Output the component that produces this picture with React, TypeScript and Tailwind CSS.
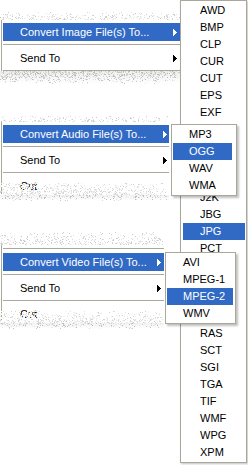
import React, { useMemo } from "react";

function cls(...c: (string | false | undefined)[]) {
  return c.filter(Boolean).join(" ");
}

// tiny seeded generator so the dissolved edges look the same every render
function rng(seed: number) {
  let s = seed >>> 0;
  return () => {
    s = (Math.imul(s, 1664525) + 1013904223) >>> 0;
    return s / 4294967296;
  };
}

const LIGHT = ["#d8d8d8", "#e2e2e2", "#ebebeb", "#cccccc"];
const GRAY = ["#bcbcbc", "#cccccc", "#d8d8d8", "#e4e4e4", "#eeeeee"];
const WASH = ["#ffffff", "#ffffff", "#ffffff", "#ffffff", "#f2f2f2", "#e4e4e4", "#d4d4d4"];

type SpeckleProps = {
  w: number;
  h: number;
  seed: number;
  from: number;
  to: number;
  palette: string[];
  className?: string;
};

function Speckle({ w, h, seed, from, to, palette, className }: SpeckleProps) {
  const paths = useMemo(() => {
    const r = rng(seed);
    const out = palette.map(() => "");
    for (let y = 0; y < h; y++) {
      const d = from + (to - from) * (h === 1 ? 0 : y / (h - 1));
      for (let x = 0; x < w; x++) {
        const edge = Math.min(1, (w - x) / 8);
        if (r() < d * edge) {
          const i = Math.floor(r() * palette.length);
          out[i] += `M${x} ${y}h1v1h-1z`;
        }
      }
    }
    return out;
  }, [w, h, seed, from, to, palette]);

  return (
    <svg width={w} height={h} className={className} shapeRendering="crispEdges" aria-hidden>
      {paths.map((d, i) => (d ? <path key={i} d={d} fill={palette[i]} /> : null))}
    </svg>
  );
}

function Arrow({ white }: { white?: boolean }) {
  return (
    <svg width="4" height="7" viewBox="0 0 4 7" shapeRendering="crispEdges" className="shrink-0">
      <path d="M0 0h1v7H0zM1 1h1v5H1zM2 2h1v3H2zM3 3h1v1H3z" fill={white ? "#fff" : "#000"} />
    </svg>
  );
}

function Item({
  label,
  hi,
  arrow,
  className,
}: {
  label: string;
  hi?: boolean;
  arrow?: boolean;
  className?: string;
}) {
  return (
    <div
      className={cls(
        "flex h-[18px] items-center justify-between whitespace-nowrap pl-[17px]",
        hi ? "bg-[#316ac5] text-white" : "text-black",
        className
      )}
    >
      <span>{label}</span>
      {arrow && <Arrow white={hi} />}
    </div>
  );
}

function Sep() {
  return (
    <div className="h-[8px] pt-[3px]">
      <div className="h-px bg-[#aca899]" />
    </div>
  );
}

function SubItem({
  label,
  hi,
  hidden,
  className,
}: {
  label: string;
  hi?: boolean;
  hidden?: boolean;
  className?: string;
}) {
  return (
    <div
      className={cls(
        "flex h-[17px] items-center whitespace-nowrap",
        hi ? "bg-[#316ac5] text-white" : "text-black",
        hidden && "invisible",
        className
      )}
    >
      {label}
    </div>
  );
}

// items that sit under the audio / video submenus are kept for the row count only
const FORMATS: [string, boolean][] = [
  ["AWD", false], ["BMP", false], ["CLP", false], ["CUR", false], ["CUT", false],
  ["EPS", false], ["EXF", false], ["FAX", true], ["GIF", true], ["ICO", true],
  ["IFF", true], ["J2K", false], ["JBG", false], ["JPG", false], ["PCT", false],
  ["PCX", true], ["PIC", true], ["PNG", true], ["PSD", true], ["RAS", false],
  ["SCT", false], ["SGI", false], ["TGA", false], ["TIF", false], ["WMF", false],
  ["WPG", false], ["XPM", false],
];

export default function App() {
  return (
    <div className="relative h-[465px] w-[248px] overflow-hidden bg-white font-['Liberation_Sans',Arial,sans-serif] text-[11px] leading-none text-black">
      {/* Image menu snippet */}
      <div className="mt-[12px] w-[181px]">
        <Speckle w={181} h={8} seed={3} from={0.08} to={0.28} palette={LIGHT} className="block" />
        <div className="ml-[1px] border-l border-[#aca899] pl-[1px] pt-[3px]">
          <Item label="Convert Image File(s) To..." hi arrow className="pr-[4px]" />
          <Sep />
          <Item label="Send To" arrow className="pr-[4px]" />
          <div className="pt-[3px]">
            <div className="h-px bg-[#aca899]" />
          </div>
        </div>
        <Speckle
          w={181}
          h={13}
          seed={7}
          from={0.7}
          to={0.04}
          palette={GRAY}
          className="block bg-linear-to-b from-[#efefef] to-white"
        />
      </div>

      {/* Audio menu snippet */}
      <div className="relative mt-[32px] w-[169px]">
        <Speckle w={169} h={6} seed={11} from={0.08} to={0.3} palette={LIGHT} className="block" />
        <div className="ml-[1px] border-l border-[#aca899] pl-[1px] pt-[3px]">
          <Item label="Convert Audio File(s) To..." hi arrow className="pr-[2px]" />
          <Sep />
          <Item label="Send To" arrow className="pr-[2px]" />
          <Sep />
          <Item label="Cut" />
        </div>
        <Speckle
          w={169}
          h={12}
          seed={19}
          from={0.2}
          to={0.95}
          palette={WASH}
          className="absolute bottom-[6px] left-0"
        />
        <Speckle
          w={169}
          h={6}
          seed={29}
          from={0.35}
          to={0.05}
          palette={GRAY}
          className="block bg-linear-to-b from-[#f2f2f2] to-white"
        />
      </div>

      {/* Video menu snippet */}
      <div className="relative mt-[31px] w-[164px]">
        <Speckle w={164} h={13} seed={23} from={0.04} to={0.3} palette={LIGHT} className="block" />
        <div className="ml-[1px] border-l border-[#aca899] pl-[1px]">
          <Sep />
          <Item label="Convert Video File(s) To..." hi arrow className="pr-[3px]" />
          <Sep />
          <Item label="Send To" arrow className="pr-[3px]" />
          <Sep />
          <Item label="Cut" />
        </div>
        <Speckle
          w={164}
          h={12}
          seed={31}
          from={0.2}
          to={0.95}
          palette={WASH}
          className="absolute bottom-[6px] left-0"
        />
        <Speckle
          w={164}
          h={6}
          seed={37}
          from={0.35}
          to={0.05}
          palette={GRAY}
          className="block bg-linear-to-b from-[#f2f2f2] to-white"
        />
      </div>

      {/* Image format submenu */}
      <div className="absolute left-[180px] top-0 z-10 w-[67px] border border-[#aca899] bg-white py-px pl-[2px] pr-px shadow-[1px_1px_2px_rgba(0,0,0,0.25)]">
        {FORMATS.map(([f, hidden]) => (
          <SubItem key={f} label={f} hi={f === "JPG"} hidden={hidden} className="pl-[17px]" />
        ))}
      </div>

      {/* Audio format submenu */}
      <div className="absolute left-[171px] top-[124px] z-20 w-[66px] border border-[#aca899] bg-white py-px pl-px pr-[4px] shadow-[2px_2px_2px_rgba(0,0,0,0.25)]">
        {["MP3", "OGG", "WAV", "WMA"].map((f) => (
          <SubItem key={f} label={f} hi={f === "OGG"} className="pl-[16px]" />
        ))}
      </div>

      {/* Video format submenu */}
      <div className="absolute left-[165px] top-[252px] z-20 w-[71px] border border-[#aca899] bg-white py-px pl-px pr-[2px] shadow-[2px_2px_2px_rgba(0,0,0,0.25)]">
        {["AVI", "MPEG-1", "MPEG-2", "WMV"].map((f) => (
          <SubItem key={f} label={f} hi={f === "MPEG-2"} className="pl-[16px]" />
        ))}
      </div>
    </div>
  );
}
